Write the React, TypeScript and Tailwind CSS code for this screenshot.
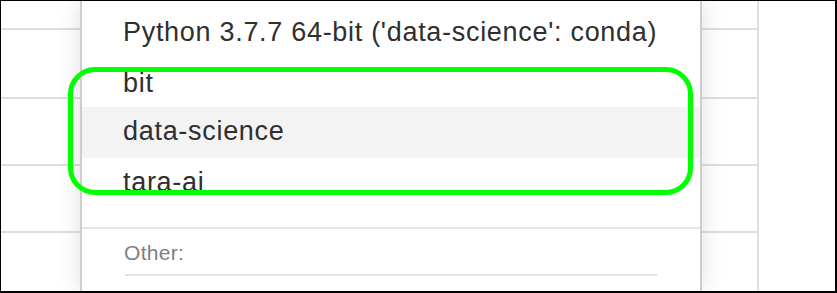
export default function App() {
  const bgRows = ['h-[29px]', 'h-[69px]', 'h-[67px]', 'h-[67px]']

  const Grid = ({ className }: { className: string }) => (
    <div className={`flex flex-col ${className}`}>
      {bgRows.map((h, i) => (
        <div key={i} className={`${h} shrink-0 border-b-2 border-[#dedede]`} />
      ))}
      <div className="flex-1" />
    </div>
  )

  return (
    <div
      className="relative w-[837px] h-[293px] overflow-hidden bg-white border-l border-t border-r-2 border-b-2 border-black flex"
      style={{ fontFamily: '"Liberation Sans", Arial, sans-serif' }}
    >
      {/* table behind the picker */}
      <Grid className="w-[79px] shrink-0" />

      {/* quick pick panel */}
      <div className="relative z-10 w-[622px] shrink-0 bg-white border-x-2 border-[#cdcdcd] shadow-[0_0_22px_rgba(0,0,0,0.13)] flex flex-col text-[#2f2f2f]">
        <div className="h-[55px] shrink-0 pt-[18px] pl-[41px] text-[27px] leading-[27px] tracking-[0.7px]">
          Python 3.7.7 64-bit ('data-science': conda)
        </div>
        <div className="h-[51px] shrink-0 pt-[14px] pl-[41px] text-[27px] leading-[27px] tracking-[0.7px]">
          bit
        </div>
        <div className="h-[51px] shrink-0 pt-[11px] pl-[41px] bg-[#f3f3f3] text-[27px] leading-[27px] tracking-[0.7px]">
          data-science
        </div>
        <div className="h-[69px] shrink-0 pt-[11px] pl-[41px] text-[27px] leading-[27px] tracking-[0.7px]">
          tara-ai
        </div>
        <div className="border-t-2 border-[#e5e5e5] px-[43px] pt-[13px]">
          <div className="-ml-[1px] text-[21px] leading-[21px] tracking-[0.3px] text-[#7f7f7f]">Other:</div>
          <div className="mt-[11px] h-[2px] bg-[#e2e2e2]" />
        </div>
      </div>

      <Grid className="w-[57px] shrink-0 border-r-2 border-[#e0e0e0]" />
      <div className="flex-1" />

      {/* highlight annotation */}
      <div className="absolute z-20 left-[67px] top-[66px] w-[625px] h-[128px] border-[5px] border-[#00ff00] rounded-[27px] pointer-events-none" />
    </div>
  )
}
